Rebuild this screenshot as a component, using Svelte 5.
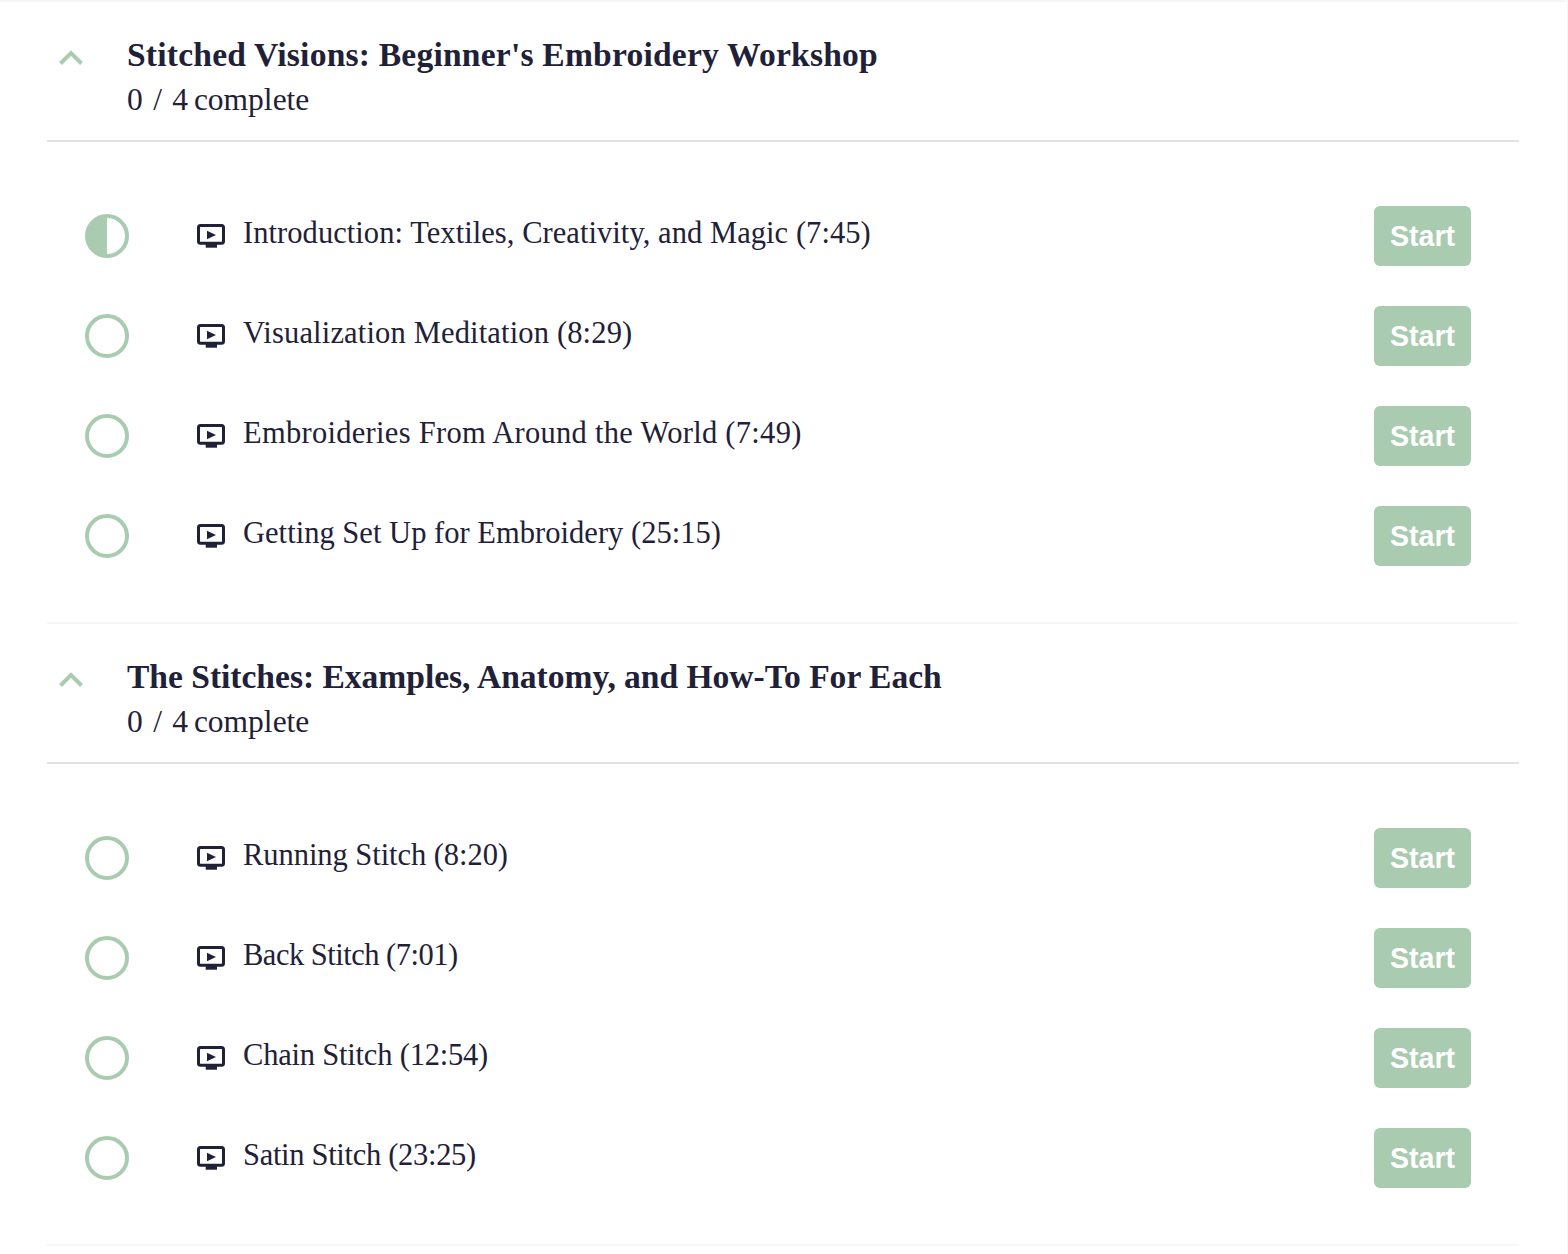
<script>
  // track: small per-line letter-spacing so line widths land where the reference's do
  const sections = [
    {
      title: "Stitched Visions: Beginner's Embroidery Workshop",
      track: 0.2,
      lectures: [
        { name: 'Introduction: Textiles, Creativity, and Magic (7:45)', track: 0.06, started: true },
        { name: 'Visualization Meditation (8:29)', track: 0.16 },
        { name: 'Embroideries From Around the World (7:49)', track: 0.29 },
        { name: 'Getting Set Up for Embroidery (25:15)', track: 0.03 }
      ]
    },
    {
      title: 'The Stitches: Examples, Anatomy, and How-To For Each',
      track: -0.03,
      lectures: [
        { name: 'Running Stitch (8:20)', track: -0.05 },
        { name: 'Back Stitch (7:01)', track: -0.5 },
        { name: 'Chain Stitch (12:54)', track: -0.2 },
        { name: 'Satin Stitch (23:25)', track: -0.3 }
      ]
    }
  ];
</script>

<div class="curriculum">
  {#each sections as section}
    <section class="section">
      <header class="section-header">
        <svg class="chevron" width="26" height="17" viewBox="0 0 26 17">
          <path d="M2.5 14.5 L13 4 L23.5 14.5" fill="none" stroke="#a9cbb0" stroke-width="4" />
        </svg>
        <div class="heading">
          <h2 style="letter-spacing: {section.track}px">{section.title}</h2>
          <p><span class="count">0 / {section.lectures.length}</span> complete</p>
        </div>
      </header>
      <ul class="lectures">
        {#each section.lectures as lecture}
          <li class="lecture">
            <span class="status" class:started={lecture.started}></span>
            <svg class="video" width="30" height="26" viewBox="0 0 30 26">
              <rect x="2.5" y="2.5" width="25" height="17.7" rx="2" fill="none" stroke="#1f2138" stroke-width="3" />
              <rect x="9.7" y="21" width="11.3" height="3.7" fill="#1f2138" />
              <path d="M11 7.7 L20 12 L11 16.3 Z" fill="#1f2138" />
            </svg>
            <span class="name" style="letter-spacing: {lecture.track}px">{lecture.name}</span>
            <button class="start">Start</button>
          </li>
        {/each}
      </ul>
    </section>
  {/each}
</div>

<style>
  :global(body) {
    background: #fff;
  }

  .curriculum {
    width: 1568px;
    height: 1254px;
    box-sizing: border-box;
    border-top: 2px solid #f6f6fa;
    border-right: 1px solid #f6f6fa;
    padding: 0 48px 0 47px;
    color: #1f2138;
    font-family: "Liberation Serif", serif;
    overflow: hidden;
  }

  .section {
    height: 620px;
    border-bottom: 2px solid #f6f6fa;
  }

  .section-header {
    display: flex;
    height: 138px;
    padding-left: 11px;
    border-bottom: 2px solid #e2e2e2;
  }

  .chevron {
    margin-top: 47px;
    margin-right: 43px;
    flex: none;
  }

  .heading {
    padding-top: 33px;
  }

  h2 {
    margin: 0;
    font-size: 33.6px;
    line-height: 40px;
    font-weight: 700;
    white-space: nowrap;
  }

  p {
    margin: 7px 0 0;
    font-size: 31.5px;
    line-height: 36px;
    white-space: nowrap;
  }

  .count {
    word-spacing: 2.5px;
    margin-right: -2px;
  }

  .lectures {
    list-style: none;
    margin: 0;
    padding: 44px 48px 0 38px;
  }

  .lecture {
    display: flex;
    align-items: center;
    height: 100px;
  }

  .status {
    flex: none;
    width: 44px;
    height: 44px;
    box-sizing: border-box;
    border: 4px solid #a9cbb0;
    border-radius: 50%;
    margin-right: 67px;
  }

  .status.started {
    background: linear-gradient(to right, #a9cbb0 50%, #fff 50%);
  }

  .video {
    flex: none;
    margin-right: 17px;
  }

  .name {
    flex: 1;
    font-size: 30.5px;
    line-height: 36px;
    position: relative;
    top: -3px;
    white-space: nowrap;
  }

  .start {
    flex: none;
    width: 97px;
    height: 60px;
    padding: 0;
    border: 0;
    border-radius: 6px;
    background: #a9cbb0;
    color: #fff;
    font-family: "Liberation Sans", sans-serif;
    font-size: 28.6px;
    font-weight: 700;
  }
</style>
